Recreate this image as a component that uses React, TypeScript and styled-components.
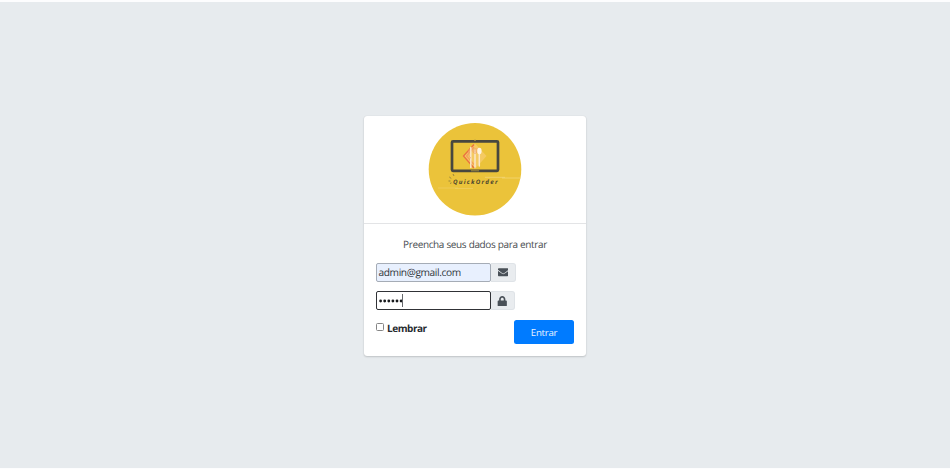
import React from 'react';
import styled, { createGlobalStyle } from 'styled-components';
import { FaEnvelope, FaLock } from 'react-icons/fa';

const GlobalStyle = createGlobalStyle`
  * { box-sizing: border-box; }
  body { margin: 0; background: #fff; overflow: hidden; font-family: "Open Sans", "Noto Sans", sans-serif; text-rendering: geometricPrecision; }
`;

const Page = styled.main`
  height: 469px;
  border-top: 2px solid #fdfdfe;
  border-bottom: 1px solid #fdfdfe;
  background: #e7ebee;
  display: flex;
  justify-content: center;
  align-items: flex-start;
  padding-top: 113.5px;
`;

const Card = styled.section`
  width: 222px;
  height: 240.5px;
  background: #fff;
  border-radius: 3px;
  box-shadow: 0 0 1px rgba(0, 0, 0, 0.14), 0 1px 2px rgba(0, 0, 0, 0.16);
`;

const CardHeader = styled.header`
  height: 108px;
  padding-top: 7px;
  border-bottom: 1px solid #e3e4e6;
  display: flex;
  justify-content: center;
`;

const Form = styled.form`
  padding: 13px 12px 0;
`;

const Message = styled.p`
  margin: 0 0 11.5px;
  text-align: center;
  font-size: 10px;
  letter-spacing: -0.37px;
  word-spacing: 0.2px;
  line-height: 15px;
  white-space: nowrap;
  color: #484c50;
`;

const InputRow = styled.div<{ $gap: number }>`
  display: flex;
  height: 19px;
  margin-bottom: ${({ $gap }) => $gap}px;
`;

const Field = styled.div<{ $focused?: boolean }>`
  width: 115px;
  display: flex;
  align-items: center;
  padding-left: 1.5px;
  padding-bottom: 0.5px;
  font-size: 10.2px;
  letter-spacing: -0.4px;
  color: #30363c;
  border: ${({ $focused }) => ($focused ? '1.5px solid #303236' : '1px solid #a5acb6')};
  border-radius: 2px;
  background: ${({ $focused }) => ($focused ? '#fff' : '#e8f0fe')};
`;

const Dots = styled.svg`
  display: block;
  width: 25px;
  height: 4px;
  flex: none;
  fill: #17191c;
`;

const Caret = styled.span`
  width: 1px;
  height: 13px;
  margin-left: -2px;
  background: #66696d;
`;

const Addon = styled.span<{ $width: number }>`
  width: ${({ $width }) => $width}px;
  display: flex;
  align-items: center;
  justify-content: center;
  color: #495057;
  font-size: 10.5px;
  background: #e9ecef;
  border: 1px solid #dfe3e7;
  border-left: 0;
  border-radius: 0 3px 3px 0;
`;

const Actions = styled.div`
  display: flex;
  justify-content: space-between;
  align-items: flex-start;
`;

const Remember = styled.label`
  display: flex;
  align-items: center;
  gap: 3px;
  height: 15px;
  font-size: 10px;
  letter-spacing: -0.45px;
  font-weight: 700;
  color: #272b30;
`;

const Checkbox = styled.span`
  width: 8px;
  height: 8px;
  margin-bottom: 1px;
  border: 1px solid #858585;
  border-radius: 1.5px;
  background: #fff;
`;

const Submit = styled.button`
  width: 60px;
  height: 23.5px;
  padding: 1px 0 0;
  border: 0;
  border-radius: 2.5px;
  background: #007bff;
  color: #e9f3ff;
  font: 9.7px "Open Sans", "Noto Sans", sans-serif;
  letter-spacing: -0.3px;
`;

const Logo = () => (
  <svg width="94" height="94" viewBox="0 0 94 94" aria-label="QuickOrder">
    <circle cx="47" cy="46.3" r="46.3" fill="#ebc33a" />
    <rect x="24" y="18.3" width="46" height="29.5" rx="1" fill="none" stroke="#48473f" strokeWidth="2.7" />
    <path d="M46 17.3h2M43 47.8h8" stroke="#a28c3c" strokeWidth="1" />
    <path d="M47 20.5 58.5 33 47 46 35.5 33Z" fill="#f5ca62" />
    <path d="M46 21.5 35.5 33 46 45" fill="none" stroke="#eb7040" strokeWidth="1.3" />
    <path d="M46 24 38.5 33 46 41.5" fill="none" stroke="#f3a159" strokeWidth="1.3" />
    <path d="M42.8 24.5v20M47 27v17M51.3 29v14" stroke="#fae6cb" strokeWidth="1.5" strokeLinecap="round" />
    <path d="M41.5 26c-1.5 4-1 8 1.3 9M45 25v4q2 3 4 0v-4M47 25v4" fill="none" stroke="#ef9d6b" strokeWidth=".8" />
    <ellipse cx="51.4" cy="28" rx="2.2" ry="3.3" fill="#fff4e2" />
    <path d="m25 51 1 2M21.3 54l2 1.5M20.5 58h2M22 60.5l1.5-.7" stroke="#87753b" strokeWidth=".8" />
    <path d="M57 54.3h20M74 55h18.5" stroke="#f3d980" strokeWidth=".7" />
    <path d="M10 65h20M27 65.5h18" stroke="#f1d26b" strokeWidth=".6" />
    <text x="25" y="61.4" textLength="44.5" fontFamily="Open Sans, sans-serif" fontSize="6.2" fontWeight="700" fontStyle="italic" fill="#4e472f">QuickOrder</text>
  </svg>
);

export default function App() {
  return (
    <>
      <GlobalStyle />
      <Page>
        <Card>
          <CardHeader><Logo /></CardHeader>
          <Form>
            <Message>Preencha seus dados para entrar</Message>
            <InputRow $gap={9.3}>
              <Field>admin@gmail.com</Field>
              <Addon $width={25}><FaEnvelope /></Addon>
            </InputRow>
            <InputRow $gap={10}>
              <Field $focused>
                <Dots viewBox="0 0 25 4" aria-label="Senha">
                  {Array.from({ length: 6 }, (_, i) => <circle key={i} cx={1.6 + i * 4.1} cy="2" r="1.4" />)}
                </Dots>
                <Caret />
              </Field>
              <Addon $width={24}><FaLock /></Addon>
            </InputRow>
            <Actions>
              <Remember><Checkbox />Lembrar</Remember>
              <Submit type="button">Entrar</Submit>
            </Actions>
          </Form>
        </Card>
      </Page>
    </>
  );
}
